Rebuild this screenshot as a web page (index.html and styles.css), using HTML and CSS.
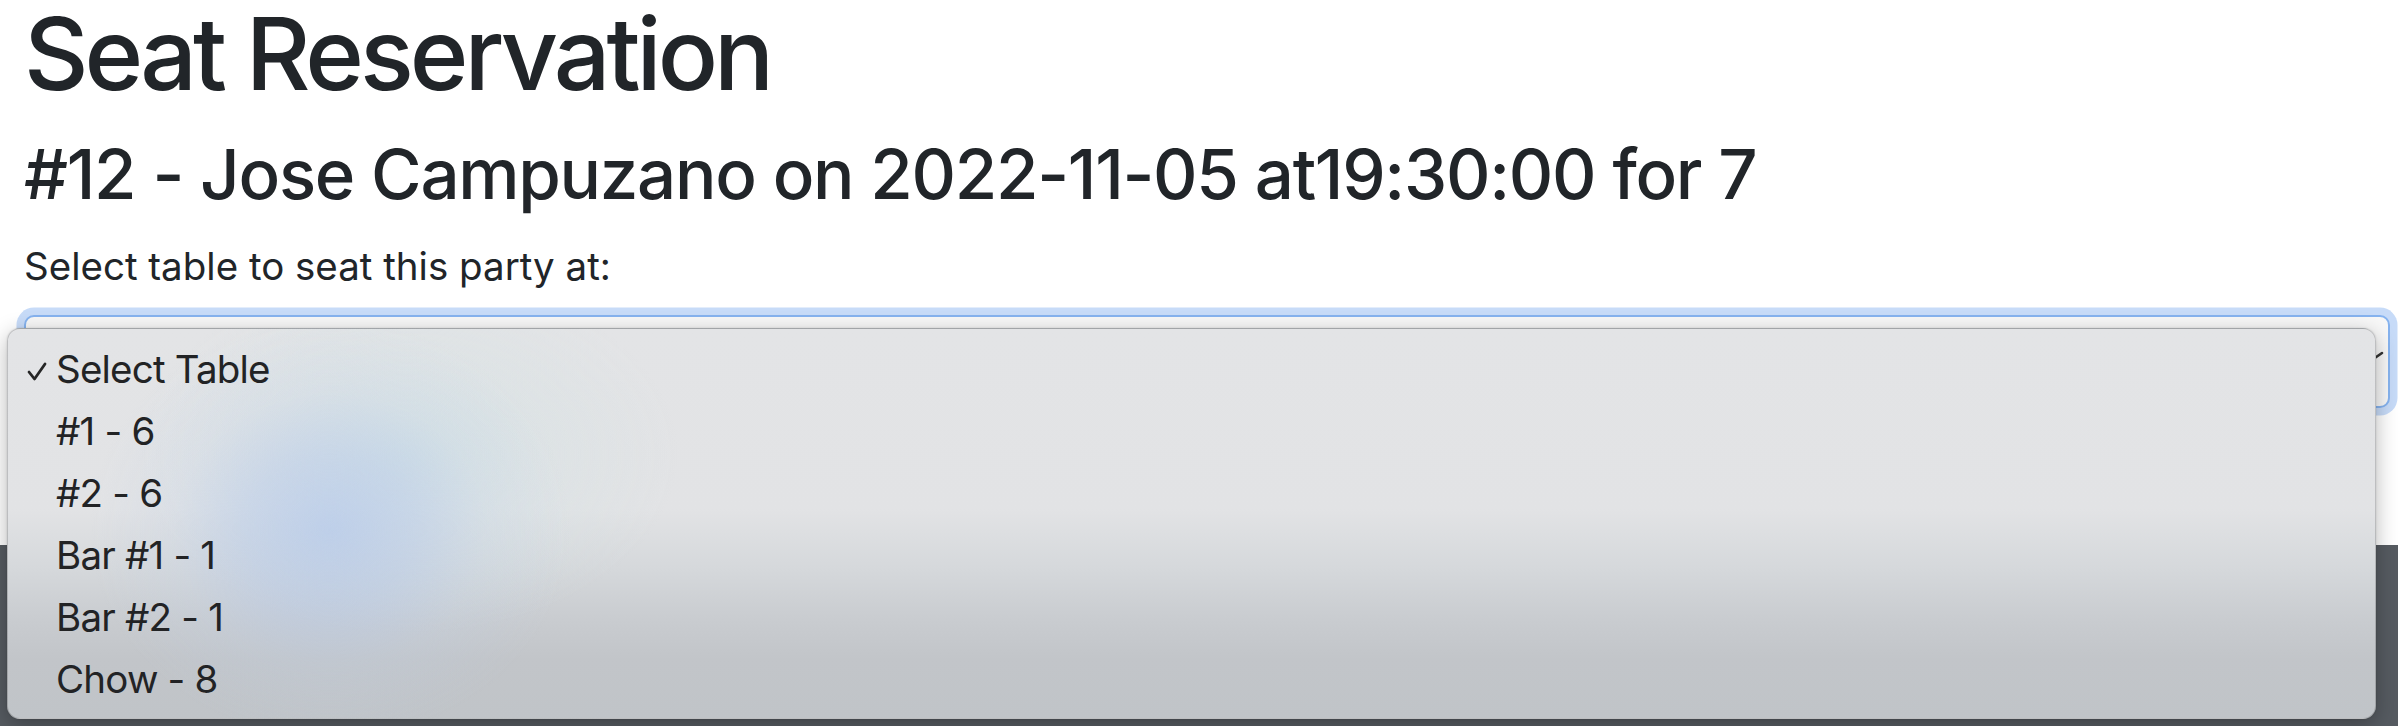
FILE: index.html
```html
<!DOCTYPE html>
<html lang="en">
<head>
<meta charset="utf-8">
<title>Seat Reservation</title>
<link rel="stylesheet" href="styles.css">
</head>
<body>
<main class="page">
  <h1 class="title">Seat Reservation</h1>
  <h2 class="subtitle">#12 - Jose Campuzano on 2022-11-05 at19:30:00 for 7</h2>
  <label class="field-label">Select table to seat this party at:</label>
  <div class="select-box">
    <svg class="select-arrow" width="30" height="16" viewBox="0 0 30 16"><path d="M2 3 L15 12 L28 3" fill="none" stroke="#333" stroke-width="2.6" stroke-linecap="round" stroke-linejoin="round"/></svg>
  </div>
  <div class="spacer"></div>
</main>
<footer class="footer"></footer>

<div class="popup">
  <div class="option selected">
    <span class="check"><svg width="20" height="19" viewBox="0 0 20 19"><path d="M2 10 L7.5 17 L18 2" fill="none" stroke="#262626" stroke-width="2.8" stroke-linecap="round" stroke-linejoin="round"/></svg></span>
    <span class="opt-text">Select Table</span>
  </div>
  <div class="option"><span class="check"></span><span class="opt-text">#1 - 6</span></div>
  <div class="option"><span class="check"></span><span class="opt-text">#2 - 6</span></div>
  <div class="option"><span class="check"></span><span class="opt-text">Bar #1 - 1</span></div>
  <div class="option"><span class="check"></span><span class="opt-text">Bar #2 - 1</span></div>
  <div class="option"><span class="check"></span><span class="opt-text">Chow - 8</span></div>
</div>
</body>
</html>
```
FILE: styles.css
```css
* { box-sizing: border-box; }
html, body { margin: 0; padding: 0; }
body {
  background: #ffffff;
  color: #212529;
  font-family: Inter, "Liberation Sans", sans-serif;
  width: 2398px;
  height: 726px;
  overflow: hidden;
  position: relative;
}
.page {
  padding: 0 8px 0 24px;
  display: flex;
  flex-direction: column;
}
.title {
  margin: -6px 0 0;
  font-size: 100px;
  line-height: 120px;
  font-weight: 500;
  letter-spacing: -4px;
}
.subtitle {
  margin: 18px 0 0;
  font-size: 69px;
  line-height: 84px;
  font-weight: 500;
  letter-spacing: -1.3px;
}
.field-label {
  margin-top: 27px;
  font-size: 38.5px;
  line-height: 46px;
  display: block;
}
.select-box {
  margin-top: 26px;
  height: 93px;
  border: 2.4px solid #86b3ef;
  border-radius: 10px;
  background: #f8f8f8;
  box-shadow: 0 0 0 7.5px #c7dbf8;
  position: relative;
  display: flex;
  align-items: center;
  justify-content: flex-end;
  padding-right: 4px;
}
.select-arrow { display: block; margin-top: -8px; }
.spacer { height: 137px; }
.footer {
  height: 181px;
  background: #565b61;
}
.popup {
  position: absolute;
  left: 7px;
  top: 328px;
  width: 2369px;
  height: 391px;
  border: 1px solid rgba(0,0,0,0.16);
  border-radius: 13px;
  padding-top: 9px;
  box-shadow: 0 6px 22px rgba(0,0,0,0.28), 0 0 2px rgba(0,0,0,0.15);
  background:
    radial-gradient(ellipse 240px 210px at 322px 200px, rgba(178,200,236,0.7) 0%, rgba(182,202,234,0.5) 35%, rgba(190,208,232,0.2) 65%, rgba(200,215,230,0) 100%),
    radial-gradient(ellipse 270px 180px at 400px 125px, rgba(205,225,228,0.6) 0%, rgba(210,226,228,0.3) 50%, rgba(215,228,228,0) 100%),
    linear-gradient(to bottom, #e3e4e6 0px, #e2e3e5 180px, #d5d8db 240px, #c9ccd0 290px, #c2c5c9 330px, #c0c4c8 391px);
}
.option {
  display: flex;
  align-items: center;
  height: 62px;
  font-size: 38.5px;
  line-height: 62px;
  color: #222325;
  letter-spacing: -0.8px;
}
.check {
  width: 48px;
  flex: none;
  display: flex;
  align-items: center;
  padding-left: 19px;
  padding-top: 4px;
}
.check svg { display: block; }
.opt-text { white-space: nowrap; }
```
